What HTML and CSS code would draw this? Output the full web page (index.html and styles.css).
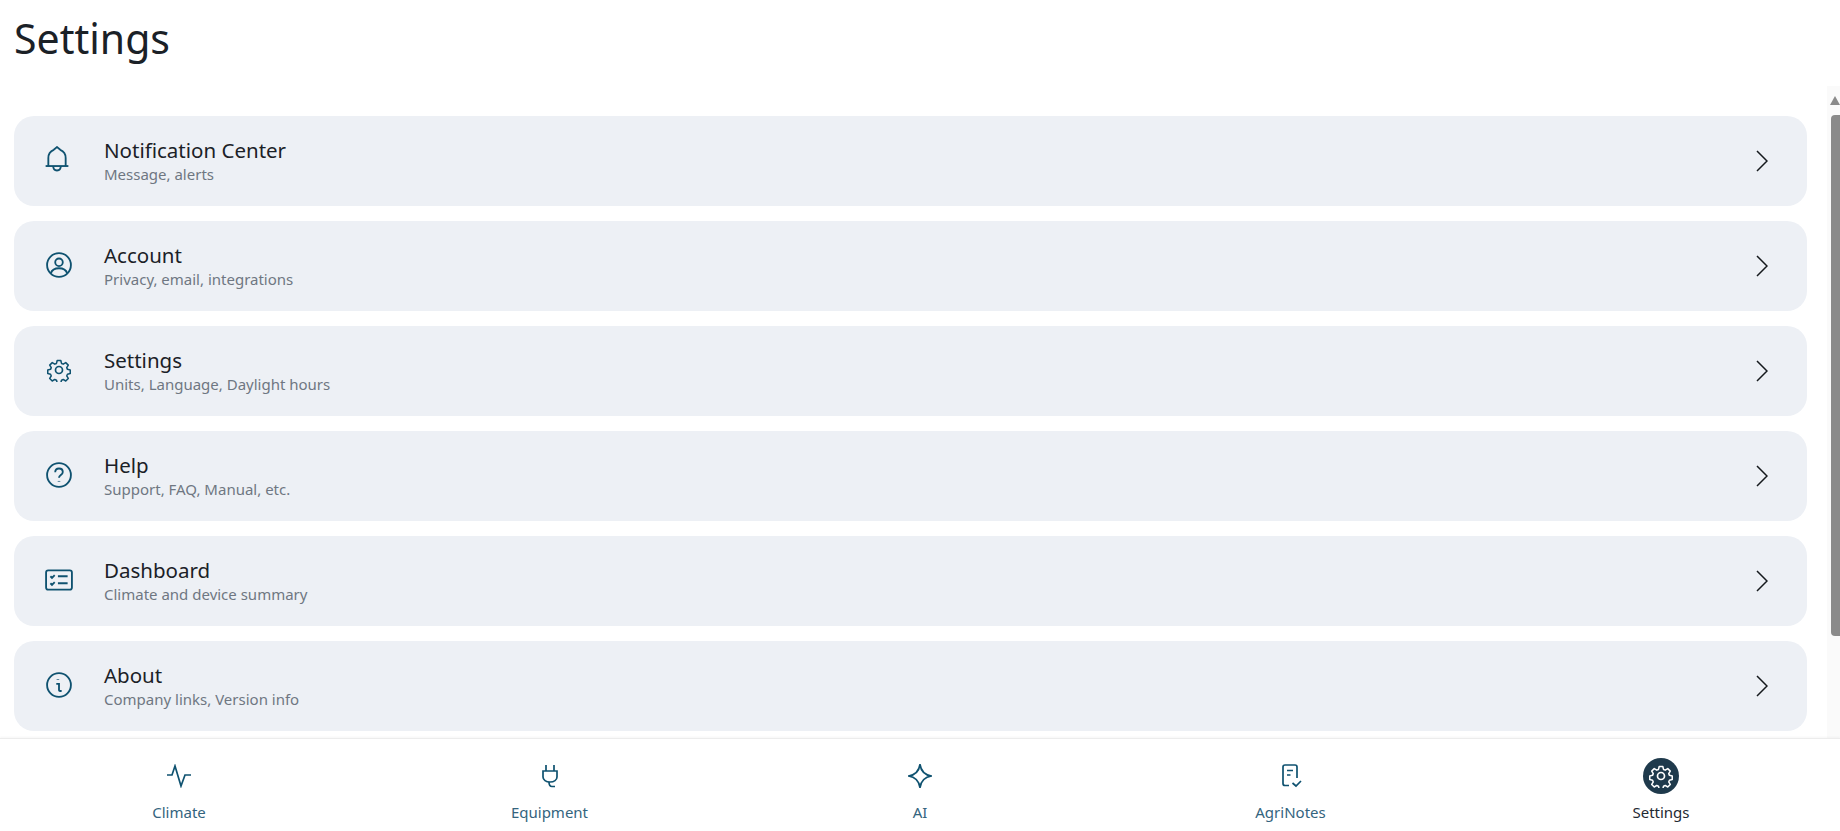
FILE: index.html
```html
<!DOCTYPE html>
<html lang="en">
<head>
    <meta charset="UTF-8">
    <meta name="viewport" content="width=device-width, initial-scale=1.0">
    <title>Settings</title>
    <link rel="stylesheet" href="styles.css">
</head>
<body>
    <div class="page">
        <h1 class="page-title">Settings</h1>

        <div class="content">
            <div class="menu-list">
                <a class="menu-item">
                    <svg class="menu-icon bell-icon" viewBox="0 0 24 24"><path d="M1.5 18.5h21"/><path d="M4 18.5V11c0-4 2.500-6.500 5-7.500L12 1l3 2.500c2.500 1 5 3.500 5 7.500v7.500"/><path d="M8.500 18.500c0 5.500 7 5.500 7 0"/></svg>
                    <div class="menu-text">
                        <div class="menu-title">Notification Center</div>
                        <div class="menu-sub">Message, alerts</div>
                    </div>
                    <svg class="chevron" viewBox="0 0 12 22"><path d="M1 1l10 10L1 21"/></svg>
                </a>
                <a class="menu-item">
                    <svg class="menu-icon" viewBox="0 0 24 24"><circle cx="12" cy="12" r="11"/><circle cx="12" cy="9.500" r="3.500"/><path d="M4.500 19.500c1-3 3.500-4.500 7.500-4.500s6.500 1.500 7.500 4.500"/></svg>
                    <div class="menu-text">
                        <div class="menu-title">Account</div>
                        <div class="menu-sub">Privacy, email, integrations</div>
                    </div>
                    <svg class="chevron" viewBox="0 0 12 22"><path d="M1 1l10 10L1 21"/></svg>
                </a>
                <a class="menu-item">
                    <svg class="menu-icon gear-icon" viewBox="0 0 24 24"><circle cx="12" cy="12" r="3.500"/><path d="M10 1.500h4l.8 3.200 1.900.8 2.800-1.700 2.800 2.800-1.700 2.800.8 1.900 3.100.7v4l-3.100.7-.8 1.900 1.700 2.800-2.800 2.800-2.800-1.700-1.900.8-.8 3.200h-4l-.8-3.200-1.900-.8-2.800 1.700-2.800-2.800 1.700-2.800-.8-1.900-3.100-.7v-4l3.100-.7.8-1.900-1.700-2.800 2.800-2.800 2.800 1.700 1.900-.8z" transform="translate(1.200 1.200) scale(.9)" stroke-linejoin="round"/></svg>
                    <div class="menu-text">
                        <div class="menu-title">Settings</div>
                        <div class="menu-sub">Units, Language, Daylight hours</div>
                    </div>
                    <svg class="chevron" viewBox="0 0 12 22"><path d="M1 1l10 10L1 21"/></svg>
                </a>
                <a class="menu-item">
                    <svg class="menu-icon" viewBox="0 0 24 24"><circle cx="12" cy="12" r="11"/><path d="M8.500 9.500c0-2.200 1.500-3.500 3.500-3.500s3.500 1.300 3.500 3.200c0 2.800-3.500 2.800-3.500 5.300"/><path d="M12 17.500v.6" stroke-width="2.400"/></svg>
                    <div class="menu-text">
                        <div class="menu-title">Help</div>
                        <div class="menu-sub">Support, FAQ, Manual, etc.</div>
                    </div>
                    <svg class="chevron" viewBox="0 0 12 22"><path d="M1 1l10 10L1 21"/></svg>
                </a>
                <a class="menu-item">
                    <svg class="menu-icon wide-icon" viewBox="0 0 26 20"><rect x="1" y="1" width="24" height="18" rx="2"/><path d="M5 6.500l1.500 1.500 2.500-2.500M5 13l1.500 1.500 2.500-2.500M12 6.500h9M12 13h9"/></svg>
                    <div class="menu-text">
                        <div class="menu-title">Dashboard</div>
                        <div class="menu-sub">Climate and device summary</div>
                    </div>
                    <svg class="chevron" viewBox="0 0 12 22"><path d="M1 1l10 10L1 21"/></svg>
                </a>
                <a class="menu-item">
                    <svg class="menu-icon" viewBox="0 0 24 24"><circle cx="12" cy="12" r="11"/><path d="M11 6.500v.6" stroke-width="2.400"/><path d="M9.500 11H12v5.500c0 1 .8 1.200 2.500 1"/></svg>
                    <div class="menu-text">
                        <div class="menu-title">About</div>
                        <div class="menu-sub">Company links, Version info</div>
                    </div>
                    <svg class="chevron" viewBox="0 0 12 22"><path d="M1 1l10 10L1 21"/></svg>
                </a>
            </div>

            <div class="scroll-track">
                <div class="scroll-arrow"></div>
                <div class="scroll-thumb"></div>
            </div>
        </div>

        <nav class="bottom-nav">
            <a class="nav-item">
                <span class="nav-icon"><svg viewBox="0 0 24 24"><path d="M0 11h5l3-9 6 20 4-11h6"/></svg></span>
                <span class="nav-label">Climate</span>
            </a>
            <a class="nav-item">
                <span class="nav-icon"><svg viewBox="0 0 24 24"><path d="M8 1v6M16 1v6M5 7h14v6c0 3-3 5-7 5s-7-2-7-5z"/><path d="M11 18c0 3 1 4.500 3 4.500h3"/></svg></span>
                <span class="nav-label">Equipment</span>
            </a>
            <a class="nav-item">
                <span class="nav-icon"><svg viewBox="0 0 24 24"><path d="M12 0.500c1 6.500 4.500 10.500 11.500 11.500-7 1-10.500 5-11.500 11.500C11 17 7.500 13 .5 12 7.500 11 11 7 12 .5z" stroke-linejoin="round"/></svg></span>
                <span class="nav-label">AI</span>
            </a>
            <a class="nav-item">
                <span class="nav-icon"><svg viewBox="0 0 24 24"><path d="M10 21.500H6c-1.500 0-2-.8-2-2V3c0-1.200.5-2 2-2h10c1.500 0 2 .8 2 2v11"/><path d="M8 6.500h6M8 11h3.500M13.500 19l3.500 3 5-5"/></svg></span>
                <span class="nav-label">AgriNotes</span>
            </a>
            <a class="nav-item active">
                <span class="nav-icon"><svg viewBox="0 0 24 24"><circle cx="12" cy="12" r="3.500"/><path d="M10 1.500h4l.8 3.200 1.900.8 2.800-1.700 2.800 2.800-1.700 2.800.8 1.900 3.100.7v4l-3.100.7-.8 1.900 1.700 2.800-2.800 2.800-2.800-1.700-1.900.8-.8 3.200h-4l-.8-3.200-1.900-.8-2.800 1.700-2.800-2.800 1.700-2.800-.8-1.900-3.100-.7v-4l3.100-.7.8-1.900-1.700-2.800 2.800-2.800 2.800 1.700 1.900-.8z" transform="translate(1.200 1.200) scale(.9)" stroke-linejoin="round"/></svg></span>
                <span class="nav-label">Settings</span>
            </a>
        </nav>
    </div>
</body>
</html>
```

FILE: styles.css
```css
body {
    margin: 0;
    background-color: #fff;
    color: #1b2127;
    font-family: "Noto Sans", "Open Sans", sans-serif;
    overflow: hidden;
}

.page {
    height: 831px;
    display: flex;
    flex-direction: column;
}

.page-title {
    margin: 0;
    padding: 11px 14px 0;
    height: 86px;
    box-sizing: border-box;
    font-size: 41px;
    line-height: 54px;
    font-weight: 400;
}

.content {
    flex: 1;
    display: flex;
    min-height: 0;
}

.menu-list {
    flex: 1;
    display: flex;
    flex-direction: column;
    gap: 15px;
    padding: 30px 20px 0 14px;
}

.menu-item {
    height: 90px;
    display: flex;
    align-items: center;
    padding: 0 39px 0 32px;
    background-color: #edf0f5;
    border-radius: 20px;
}

.menu-icon {
    width: 26px;
    height: 26px;
    flex-shrink: 0;
    fill: none;
    stroke: #0f5270;
    stroke-width: 1.7;
    margin-top: -2px;
}

.bell-icon {
    margin-left: -2px;
    margin-right: 2px;
    margin-top: -4px;
}

.gear-icon {
    width: 24px;
    height: 24px;
    margin-left: 1px;
    margin-right: 1px;
}

.wide-icon {
    width: 28px;
    height: 22px;
    margin-left: -1px;
    margin-right: -1px;
}

.menu-text {
    flex: 1;
    margin-left: 32px;
}

.menu-title {
    font-size: 20.500px;
    line-height: 27px;
    margin-top: -1px;
}

.menu-sub {
    font-size: 15px;
    line-height: 20px;
    color: #6f7782;
}

.chevron {
    width: 12px;
    height: 22px;
    margin-top: -1px;
    fill: none;
    stroke: #15191d;
    stroke-width: 1.500;
}

.scroll-track {
    width: 13px;
    padding-top: 10px;
    box-sizing: border-box;
    background-color: #fafafa;
}

.scroll-arrow {
    margin-left: 3px;
    width: 0;
    height: 0;
    border-left: 5px solid transparent;
    border-right: 5px solid transparent;
    border-bottom: 9px solid #8a8a8a;
}

.scroll-thumb {
    margin: 10px 0 0 4px;
    height: 521px;
    background-color: #8a8a8a;
    border-radius: 4px 0 0 4px;
}

.bottom-nav {
    height: 93px;
    box-sizing: border-box;
    display: flex;
    justify-content: space-between;
    padding: 19px 129px 0;
    background-color: #fff;
    border-top: 1px solid #ececec;
    box-shadow: 0 -1px 2px rgba(0, 0, 0, 0.04);
}

.nav-item {
    width: 100px;
    display: flex;
    flex-direction: column;
    align-items: center;
    color: #34647e;
}

.nav-icon {
    width: 36px;
    height: 36px;
    border-radius: 50%;
    display: flex;
    align-items: center;
    justify-content: center;
}

.nav-icon svg {
    width: 24px;
    height: 24px;
    fill: none;
    stroke: #0f5270;
    stroke-width: 1.700;
}

.nav-label {
    margin-top: 8px;
    font-size: 15px;
    line-height: 20px;
}

.nav-item.active {
    color: #1f2a33;
}

.nav-item.active .nav-icon {
    background-color: #1f3a4c;
}

.nav-item.active .nav-icon svg {
    stroke: #fff;
}
```
